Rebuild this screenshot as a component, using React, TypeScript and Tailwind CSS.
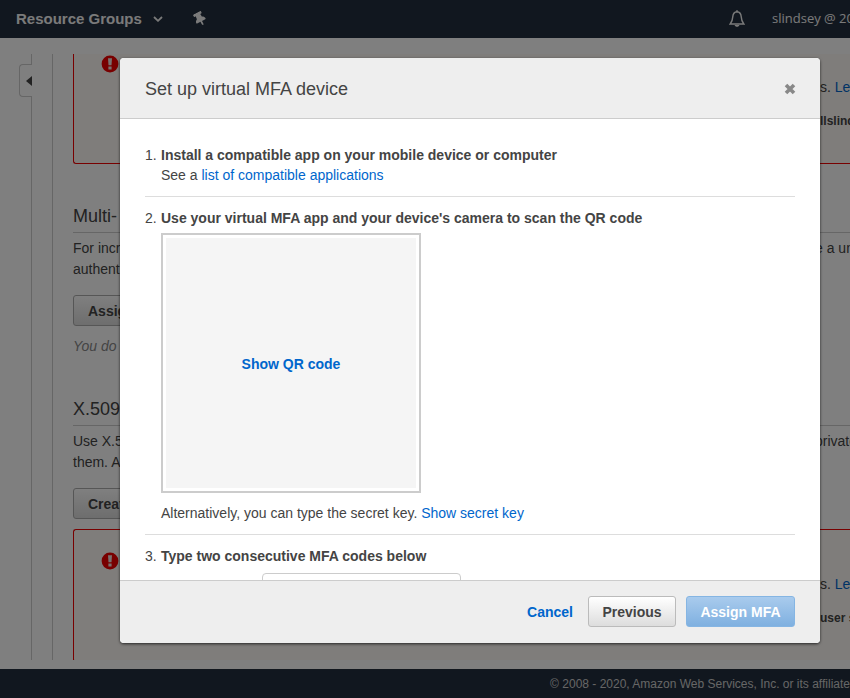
import React from "react";
import { FaThumbtack } from "react-icons/fa";

function AlertIcon() {
  return (
    <svg className="mt-px size-[18px] shrink-0" viewBox="0 0 18 18" aria-hidden="true">
      <circle cx="9" cy="9" r="8.4" fill="#f00000" />
      <path d="M7 3.200h4l-.5 7h-3z M7.400 11.500h3.200v2.900H7.400z" fill="#f0e4e0" />
    </svg>
  );
}

function BackButton({ children }: { children: React.ReactNode }) {
  return (
    <button
      type="button"
      className="block h-[31px] rounded-[3px] border border-[#adadad] bg-linear-to-b from-white to-[#dcdcdc] px-[14px] text-[14px] font-bold leading-[20px] text-[#444]"
    >
      {children}
    </button>
  );
}

function Row({ left, right = "" }: { left: string; right?: string }) {
  return (
    <p className="flex justify-between">
      <span>{left}</span>
      <span className="w-[35px]">{right}</span>
    </p>
  );
}

function Section({
  title,
  rows,
  action,
}: {
  title: string;
  rows: [string, string][];
  action: string;
}) {
  return (
    <section>
      <h2 className="border-b border-[#ccc] pb-[3px] text-[18px] leading-[26px]">{title}</h2>
      <div className="mb-[15px] mt-[5px] text-[14px] leading-[21px]">
        {rows.map(([left, right]) => (
          <Row key={left} left={left} right={right} />
        ))}
      </div>
      <BackButton>{action}</BackButton>
    </section>
  );
}

function AlertText({ detail }: { detail: string }) {
  return (
    <div className="w-[30px]">
      <p className="text-[14px] leading-[20px]">
        s. <a href="#learn" className="text-[#0066cc]">Le</a>
      </p>
      <p className="mt-[14px] text-[12px] font-bold leading-[20px]">{detail}</p>
    </div>
  );
}

export default function App() {
  return (
    <div className="relative flex h-screen flex-col overflow-hidden whitespace-nowrap bg-white font-['Liberation_Sans',Arial,sans-serif] text-[#444]">
      <header className="flex h-[38px] shrink-0 items-center overflow-hidden bg-[#232f3e] pl-4 text-[#f5f5f5]">
        <button type="button" className="flex items-center gap-[11px] text-[15px] font-bold">
          Resource Groups
          <svg className="h-[6px] w-[10px]" viewBox="0 0 10 6" fill="none" aria-hidden="true">
            <path d="M1 1l4 3.8L9 1" stroke="currentColor" strokeWidth="1.8" />
          </svg>
        </button>
        <button type="button" aria-label="Pin shortcuts" className="ml-[30px]">
          <FaThumbtack className="size-[14px] -rotate-[28deg]" aria-hidden="true" />
        </button>
        <button type="button" aria-label="Notifications" className="ml-auto">
          <svg className="h-[18px] w-4" viewBox="0 0 16 18" fill="none" aria-hidden="true">
            <path
              d="M8 1.7C5 1.9 4 4 3.8 6.6 3.6 10.5 3.3 11.500 1.200 14h13.600c-2.100-2.500-2.400-3.500-2.600-7.400C12 4 11 1.900 8 1.700z"
              stroke="currentColor"
              strokeWidth="1.4"
            />
            <path d="M5.600 15h4.800c-.3 2.400-4.500 2.400-4.800 0zM7.200.3h1.600v1.500H7.200z" fill="currentColor" />
          </svg>
        </button>
        <span className="ml-[27px] w-[78px] font-['Open_Sans',sans-serif] text-[13px]">
          slindsey @ 20
        </span>
      </header>

      <main className="flex min-h-0 flex-1 overflow-hidden pb-[9px] pt-4">
        <aside className="flex w-8 shrink-0 justify-end border-r border-[#ccc] pt-[10px]">
          <button
            type="button"
            aria-label="Collapse navigation"
            className="-mr-px flex h-[33px] w-[13px] items-center justify-end rounded-l-[4px] border border-r-0 border-[#ccc] bg-white"
          >
            <svg className="h-[10px] w-[6px]" viewBox="0 0 6 10" aria-hidden="true">
              <path d="M6 0v10L0 5z" fill="#444" />
            </svg>
          </button>
        </aside>
        <div className="ml-5 min-w-0 flex-1 overflow-hidden border-l border-[#ccc] pl-5">
          <div className="flex h-[110px] justify-between rounded-bl-[3px] border-b border-l border-[#f00000] bg-[#fefaf6] pl-[27px]">
            <AlertIcon />
            <div className="pt-[23px]">
              <AlertText detail="llslind" />
            </div>
          </div>
          <div className="pt-[39px]">
            <Section
              title="Multi-"
              action="Assign"
              rows={[
                ["For incr", "e a un"],
                ["authent", ""],
              ]}
            />
            <p className="mt-[10px] text-[14px] italic leading-[20px] text-[#888]">You do</p>
          </div>
          <div className="pt-10">
            <Section
              title="X.509"
              action="Create"
              rows={[
                ["Use X.5", "private"],
                ["them. A", ""],
              ]}
            />
          </div>
          <div className="mt-[10px] flex h-[133px] justify-between rounded-l-[3px] border-y border-l border-[#f00000] bg-[#fefaf6] pl-[27px] pt-[21px]">
            <AlertIcon />
            <div className="pt-[23px]">
              <AlertText detail="user se" />
            </div>
          </div>
        </div>
      </main>

      <footer className="flex h-[29px] shrink-0 items-center justify-end overflow-hidden bg-[#232f3e] text-[12px] text-[#ccc]">
        © 2008 - 2020, Amazon Web Services, Inc. or its affiliate
      </footer>

      <div className="absolute inset-0 flex bg-black/50 pb-[55px] pl-[120px] pr-[30px] pt-[58px]">
        <div
          role="dialog"
          aria-modal="true"
          aria-labelledby="dialog-title"
          className="flex min-w-0 flex-1 flex-col overflow-hidden rounded-[4px] bg-white shadow-[0_1px_3px_rgba(0,0,0,0.7)]"
        >
          <div className="flex h-[61px] shrink-0 items-center justify-between border-b border-[#ccc] bg-[#eee] pl-[25px] pr-6 pt-[2px]">
            <h1 id="dialog-title" className="text-[18px] leading-[26px]">
              Set up virtual MFA device
            </h1>
            <button type="button" aria-label="Close">
              <svg className="size-3" viewBox="0 0 12 12" aria-hidden="true">
                <path d="M2 2l8 8M10 2l-8 8" stroke="#888" strokeWidth="3.6" />
              </svg>
            </button>
          </div>

          <ol className="min-h-0 flex-1 overflow-hidden px-[25px] pt-[26px] text-[14px] leading-[20px]">
            <li className="flex border-b border-[#ddd] pb-[11px]">
              <span className="w-4 shrink-0">1.</span>
              <div>
                <h2 className="font-bold">Install a compatible app on your mobile device or computer</h2>
                <p>
                  See a{" "}
                  <a href="#apps" className="text-[#0066cc]">
                    list of compatible applications
                  </a>
                </p>
              </div>
            </li>
            <li className="flex border-b border-[#ddd] py-[11px]">
              <span className="w-4 shrink-0">2.</span>
              <div>
                <h2 className="font-bold">
                  Use your virtual MFA app and your device's camera to scan the QR code
                </h2>
                <div className="mb-[10px] mt-[5px] size-[260px] border-2 border-[#ccc] p-[3px]">
                  <button type="button" className="size-full bg-[#f5f5f5] pt-[2px] font-bold text-[#0066cc]">
                    Show QR code
                  </button>
                </div>
                <p>
                  Alternatively, you can type the secret key.{" "}
                  <a href="#secret" className="text-[#0066cc]">
                    Show secret key
                  </a>
                </p>
              </div>
            </li>
            <li className="flex pt-[11px]">
              <span className="w-4 shrink-0">3.</span>
              <div>
                <h2 className="font-bold">Type two consecutive MFA codes below</h2>
                <input
                  type="text"
                  aria-label="MFA code 1"
                  className="ml-[101px] mt-[7px] block h-[30px] w-[199px] rounded-[4px] border border-[#ccc] px-2"
                />
              </div>
            </li>
          </ol>

          <div className="flex h-[63px] shrink-0 items-start justify-end border-t border-[#ccc] bg-[#eee] pr-[25px] pt-[15px] text-[14px] font-bold">
            <button type="button" className="mr-[15px] h-[31px] pt-[2px] text-[#0066cc]">
              Cancel
            </button>
            <button
              type="button"
              className="mr-[10px] h-[31px] w-[88px] rounded-[3px] border border-[#bbb] bg-linear-to-b from-white to-[#ddd] pt-[2px]"
            >
              Previous
            </button>
            <button
              type="button"
              className="h-[31px] w-[109px] rounded-[3px] border border-[#85b5e3] bg-linear-to-b from-[#a9cbed] to-[#7fb0e0] pt-[2px] text-white"
            >
              Assign MFA
            </button>
          </div>
        </div>
      </div>
    </div>
  );
}
